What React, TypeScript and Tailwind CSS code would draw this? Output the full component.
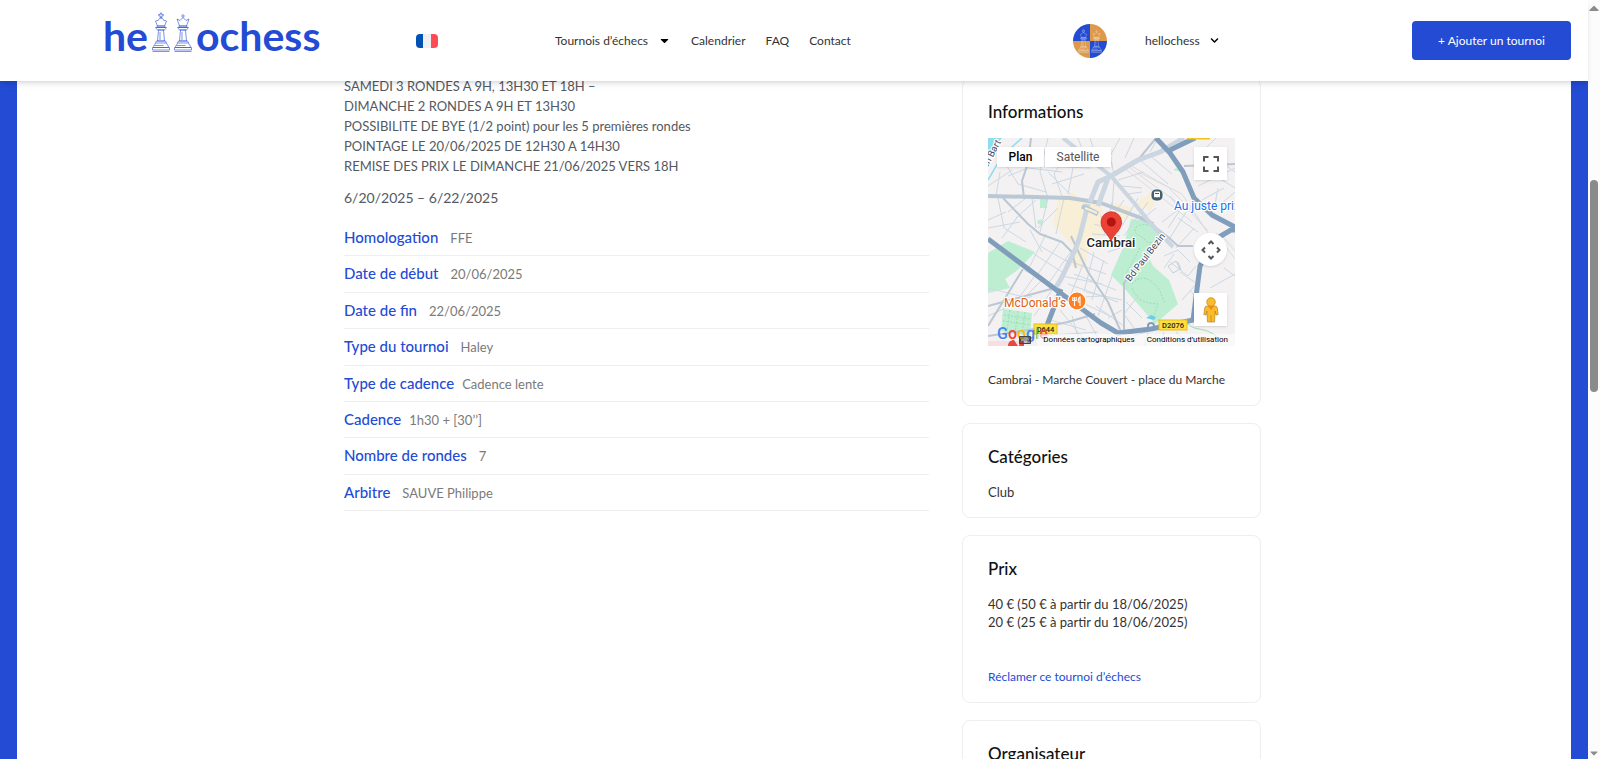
import type { ReactNode } from 'react'
import { FaCaretDown, FaChevronDown, FaCaretUp, FaKeyboard } from 'react-icons/fa'

const NAV_LINKS = ['Calendrier', 'FAQ', 'Contact']

const DETAILS = [
  { label: 'Homologation', value: 'FFE' },
  { label: 'Date de début', value: '20/06/2025' },
  { label: 'Date de fin', value: '22/06/2025' },
  { label: 'Type du tournoi', value: 'Haley' },
  { label: 'Type de cadence', value: 'Cadence lente', tight: true },
  { label: 'Cadence', value: '1h30 + [30’’]', tight: true },
  { label: 'Nombre de rondes', value: '7' },
  { label: 'Arbitre', value: 'SAUVE Philippe' },
]

// Outlined king (with cross) or queen (with crown)
function ChessPiece({ queen, className }: { queen?: boolean; className?: string }) {
  return (
    <svg viewBox="0 0 18 40" className={className} fill="none" stroke="currentColor" strokeWidth="0.6" aria-hidden="true">
      {queen ? (
        <>
          <circle cx="9" cy="4" r="1.2" />
          <path d="M3 7l3 1.5L9 5.500l3 3L15 7l-2.500 7h-7z" />
        </>
      ) : (
        <>
          <path d="M8.300 1h1.400v1.500h1.600v1.400H9.700V6H8.300V3.900H6.700V2.500h1.600z" />
          <path d="M9 6c2 0 2 1 2.500 2.200L14.500 9l-2 5h-7l-2-5 3-.8C7 7 7 6 9 6z" />
        </>
      )}
      <path d="M5 14h8v1.500H5zM3.500 15.500h11l-2 2.500h-7zM6 18h6M6.500 18l-1 11h7l-1-11M8 20v8M4.500 29h9l1 2h-11z" />
      <path d="M3.500 31c-.5 2-2 2-2 4.500h15c0-2.500-1.500-2.500-2-4.500M2.500 33.500h9M.5 35.500h17V38H.500zM.5 39.500h17" />
    </svg>
  )
}

function Logo() {
  return (
    <a href="#" aria-label="hellochess" className="flex items-end text-[41px] leading-10 font-bold text-[#234bd3]">
      <span>he</span>
      <ChessPiece className="mb-1 ml-1 h-10 w-[18px]" />
      <ChessPiece queen className="mx-1 mb-1 h-10 w-[18px]" />
      <span>ochess</span>
    </a>
  )
}

function Avatar() {
  return (
    <div className="relative grid size-[34px] grid-cols-2 overflow-hidden rounded-full">
      <span className="bg-[#234bd3]" />
      <span className="bg-[#dd9a4c]" />
      <span className="bg-[#dd9a4c]" />
      <span className="bg-[#234bd3]" />
      <div className="absolute inset-0 flex items-center justify-center gap-0.5 text-white/70">
        <ChessPiece className="h-6 w-[11px]" />
        <ChessPiece queen className="h-6 w-[11px]" />
      </div>
    </div>
  )
}

function Header() {
  return (
    <header className="relative z-10 grid h-[81px] shrink-0 grid-cols-[416fr_139fr_518fr_339fr_auto] items-center bg-white pr-[17px] text-xs text-[#333] shadow-md">
      <div className="pb-[14px] pl-[103px]">
        <Logo />
      </div>
      <button aria-label="Français" className="flex h-[14px] w-[22px] overflow-hidden rounded">
        <span className="h-full flex-1 bg-[#0052b4]" />
        <span className="h-full flex-1 bg-[#f0f0f0]" />
        <span className="h-full flex-1 bg-[#ff4b55]" />
      </button>
      <nav className="flex items-center gap-5 whitespace-nowrap">
        <a href="#" className="flex items-center gap-2.5">
          Tournois d’échecs
          <FaCaretDown className="size-[13px] text-black" />
        </a>
        {NAV_LINKS.map((link) => (
          <a key={link} href="#">
            {link}
          </a>
        ))}
      </nav>
      <div className="flex items-center gap-[38px]">
        <Avatar />
        <button className="flex items-center gap-2.5">
          hellochess
          <FaChevronDown className="size-[9px] text-black" />
        </button>
      </div>
      <button className="h-[39px] w-[159px] rounded bg-[#234bd3] text-white">+ Ajouter un tournoi</button>
    </header>
  )
}

function MapDrawing() {
  return (
    <svg viewBox="0 0 247 208" preserveAspectRatio="xMidYMid slice" className="h-full w-full" fill="none" fontFamily="Roboto, sans-serif">
      <rect width="247" height="208" fill="#f3f1f2" />

      {/* Built-up areas */}
      <path d="M70 62l14-8 8 6 18 4 8 15-2 18-14 8-6 26-16-3 5-20-20-22zM148 66l14-12 8 6-8 12z" fill="#f9eed6" />
      <path d="M125 64l20 6-6 12-14-3z" fill="#f9eed6" />

      {/* Parks */}
      <g fill="#bdeed2">
        <path d="M20 103l27 11-16 17-14 10 5 9-22 5v-40z" />
        <path d="M143 81l22 3 10 14-2 8-12 14 4 8 16 14 9 24-23 20-30-35-14-14 12-27z" />
        <path d="M15 171l29 4-2 23-29-5z" />
        <path d="M52 61h7v9h-7zM49 83l4-2 2 6-5-1zM186 31l8-2 2 4h-9z" />
      </g>
      <g stroke="#8fd9ae" strokeWidth="0.8" strokeDasharray="2 1.500">
        <path d="M148 89c10-6 20 0 22 7s-9 12-13 6-13-4-9-13M152 110l-14 26M160 112l-11 20M144 146c8-9 16-8 27 5l6 14M144 150c6 14 14 15 26 16l-5 14" />
        <path d="M16 177l26 4M15 183l27 4M22 172l-3 21M30 173l-3 22M37 174l-3 22" />
      </g>
      <path d="M0 0h14L0 17z" fill="#8ddff0" />
      <path d="M0 42L14 18 34 0" stroke="#8ddff0" strokeWidth="1.500" />
      <path d="M158 180l5-3 5 2-2 3z" fill="#74cbe8" />
      <path d="M0 203h40l-6 5H0z" fill="#f8dfdf" />

      {/* Railway */}
      <g stroke="#d9d9dc" strokeWidth="0.9">
        <path d="M138 27l34 25 28 20 20 21M142 27l38 22 26 26 14 20M136 30l36 28 32 26M150 34l44 22 24 36" />
        <path d="M228 95l19 26M232 95l15 18" />
      </g>

      {/* Small streets */}
      <g stroke="#cdd8e2" strokeWidth="1">
        <path d="M14 20l16 26 28 8M20 38l20-8 34 4M60 0l-8 34 8 26M82 10L66 36l8 22M47 28l56 2M0 48l24-16M12 34L8 58M60 34l22 22M88 14l-8 42M96 36l-32 10M20 74l18-14M28 80l20-18M44 60l4 30M60 60l-8 34M70 70L50 90M76 60l-8 36M10 60l6 30 22 14M0 82l18-8M0 90l32-6M30 78L14 100" />
        <path d="M90 0l6 16M102 0l8 24 14-4M132 0l-10 18 4 18M146 0l-9 20M170 0l-8 14M152 22l28 24M160 16l24 20M130 42l26-8M134 48l20 2M126 42l-2 30M140 56l14-2M136 62l-10 14M150 60l-16 28M160 64l-24 34M168 70l-20 16M144 76l22 10M112 78l24 8M106 86l26 8M104 96l28 2M124 64l-8 34M182 58l10 14-12 18M174 84l16-12M198 74l-16 26M190 80l20 14M206 90l-18 20" />
        <path d="M42 92l12 22M58 96l-18 36M72 104l-22 32M84 112l-24 34M46 116l28 18M52 108l28 16M78 122l40 14M74 138l40 8M92 110l28 16M96 124l-14 34M106 114l-10 40M116 122l-12 40M124 138l-14 40M86 136l42 16M80 146l50 18M98 154l36 8M76 156l46 22M120 114l12-4M108 110l22-8M70 160l46-2M36 132l18 10-26 26M48 136l-24 34M64 152l-18 26M0 150l32 8M0 178l44-20M48 162l18 10M72 172l24 30M84 178l8 28M96 174l16 30M62 182l36 10M50 198l60-4M108 168l28 20M120 180l14-8" />
        <path d="M150 158l-14 18 10 14M138 164l16 16M176 118l14-6 12 12M182 124l18 14 8-10M186 116l-10 14M192 134l20 14M194 162l16-18M202 152l8 10M215 30l32 20M222 16l25 18M210 48l37-18M228 70l19-16M214 62l22-12M236 130l11 8M222 150l25-14M188 194l16 14M176 194l-4 14M160 194l-4 14M146 198l12-4M214 14l14-14M230 50l-4 22" />
      </g>
      <path d="M180 128l8-5 4 8-7 4zM190 124l3 8" stroke="#c4d1dd" />
      <path d="M200 186c8 8 18 2 30 14" stroke="#9bdcb8" />

      {/* Secondary roads */}
      <g stroke="#bbc7d3" strokeWidth="2" strokeLinejoin="round">
        <path d="M43 0l-3 25-6 18 2 17M15 60l25 26 12 10 22 8 10 10 4 16M83 98l17 36 20 30 13 30M136 194v-49l37-47M0 168l63-17M0 198l47-7 33-7 27-8M35 131L0 188M158 82l22 17 10 9h15M196 28l51-2M168 0l-18 22" />
      </g>
      <g stroke="#cbd6e1" strokeWidth="5" strokeLinejoin="round">
        <path d="M0 58l47 1 35 1 31 5 40 15 12 6" stroke="#bac8d5" strokeWidth="4" />
        <path d="M75 0l25 20 23 18 24 28 16 20 22 23" strokeWidth="4" />
        <path d="M102 64l8-20 13-6 27-16 22-8 24-14" />
        <path d="M110 68l10-28M100 66l-8 32-4 12-15 31-6 10" />
        <path d="M94 68l16 8" stroke="#bac8d5" />
      </g>
      <path d="M97 70l12 5" stroke="#f9eed6" strokeWidth="2" />

      {/* Main roads */}
      <g stroke="#819dbc" strokeWidth="5" strokeLinejoin="round">
        <path d="M168 0l14 15 13 19 11 26 18 17 23 12M182 12l25-12" />
        <path d="M0 101l67 50 46 34 17 10 33-4 42-9 7-54 14-26 17-10h10M73 151l-15 39" />
      </g>
      <circle cx="163" cy="188" r="3" stroke="#819dbc" strokeWidth="2" />

      {/* Road badges */}
      <g fontSize="7.500" fontWeight="500" textAnchor="middle">
        <path d="M199 0h23v1.500h-23z" fill="#f2c31b" />
        <rect x="46" y="186" width="23" height="10" fill="#ffdf3f" stroke="#e5bd20" />
        <text x="57.500" y="194" fill="#222">D644</text>
        <rect x="171" y="182" width="28" height="10" fill="#ffdf3f" stroke="#e5bd20" />
        <text x="185" y="190" fill="#222">D2076</text>
      </g>

      {/* Places */}
      <g stroke="#fff" strokeWidth="2.500" paintOrder="stroke" strokeLinejoin="round">
        <text x="186" y="72" fontSize="12" fill="#1a73e8">Au juste prix</text>
        <text x="16" y="169" fontSize="12" fill="#d8621b">McDonald’s</text>
        <text x="123" y="109" fontSize="13" fontWeight="500" fill="#222" textAnchor="middle">Cambrai</text>
        <text transform="translate(142 144) rotate(-52)" fontSize="9.500" fill="#3f4a59">Bd Paul Bezin</text>
        <text transform="translate(-6 40) rotate(-62)" fontSize="9.500" fill="#3f4a59">Jean Bart</text>
      </g>
      <rect x="163" y="51" width="12" height="12" rx="5" fill="#45606f" stroke="#fff" strokeWidth="0.800" />
      <rect x="166" y="53.500" width="6" height="6" rx="1" fill="#fff" />
      <path d="M167 55.500h4M167 61l1-2M171 61l-1-2" stroke="#45606f" />
      <path d="M89 173.500l-5-4h10z" fill="#fff" />
      <circle cx="89" cy="163" r="9" fill="#ff8020" stroke="#fff" strokeWidth="1.200" />
      <path d="M86.500 159v9M84.800 159v3.500h3.400V159M92 168v-9c-2 1-2 4-1.500 5H92" stroke="#fff" strokeWidth="1.100" />

      {/* Hospital marker at the bottom edge */}
      <path d="M20 208c0-4 3-6 6-6l4 6zM31 208l1-5h4v5z" fill="#ea4545" />

      {/* Marker */}
      <path d="M123 104c-1-7-10-11-10-20a10.300 10.300 0 0 1 20.600 0c0 9-9.600 13-10.600 20z" fill="#ea4335" stroke="#c5221f" strokeWidth="0.700" />
      <circle cx="123.300" cy="84" r="4.500" fill="#b31412" />
    </svg>
  )
}

function TournamentMap() {
  return (
    <div className="relative h-[208px] overflow-hidden font-[Roboto,sans-serif]">
      <MapDrawing />
      {/* Map controls float over the drawing */}
      <div className="absolute top-[9px] left-[9px] flex gap-px text-xs">
        <button className="h-5 w-[47px] bg-white font-medium text-black shadow-sm">Plan</button>
        <button className="h-5 w-[66px] bg-white text-[#565656] shadow-sm">Satellite</button>
      </div>
      <button aria-label="Plein écran" className="absolute top-[9px] right-2 grid size-[33px] place-items-center bg-white shadow">
        <svg viewBox="0 0 16 16" className="size-4" fill="none" stroke="#555" strokeWidth="2">
          <path d="M1 5.500V1h4.500M10.500 1H15v4.500M15 10.500V15h-4.500M5.500 15H1v-4.500" />
        </svg>
      </button>
      <button aria-label="Commandes de la caméra" className="absolute top-[95px] right-2 grid size-[33px] place-items-center rounded-full bg-white shadow">
        <svg viewBox="0 0 20 20" className="size-5" fill="none" stroke="#555" strokeWidth="2">
          <path d="M7.500 4L10 1.500 12.500 4M7.500 16l2.500 2.500 2.500-2.500M4 7.500L1.500 10 4 12.500M16 7.500l2.500 2.500-2.500 2.500" />
        </svg>
      </button>
      <button aria-label="Street View" className="absolute top-[155px] right-2 grid size-[33px] place-items-center bg-white shadow">
        <svg viewBox="0 0 16 26" className="h-[26px] w-4" fill="#fbbc2c" stroke="#a5761e" strokeWidth="0.600">
          <path d="M3.500 9h9c1 0 1.500.8 1.700 2l1 6.500-2.200.5-.8-4-.7 11h-7l-.7-11-.8 4-2.200-.5 1-6.500C2 9.800 2.500 9 3.500 9z" />
          <circle cx="8" cy="5" r="4.300" />
          <path d="M5 9l3 4 3-4z" fill="#e58b1f" stroke="none" />
          <path d="M8 18v7" />
        </svg>
      </button>
      <div className="absolute bottom-0.5 left-[9px] text-base leading-5 font-medium">
        <span className="text-[#4285f4]">G</span>
        <span className="text-[#ea4335]">o</span>
        <span className="text-[#fbbc05]">o</span>
        <span className="text-[#4285f4]">g</span>
        <span className="text-[#34a853]">l</span>
        <span className="text-[#ea4335]">e</span>
      </div>
      <div className="absolute right-0 bottom-0 flex h-3 items-center text-[8px] text-black">
        <button className="flex h-3 items-center gap-1.5">
          <FaKeyboard className="size-3 text-[#444]" />
          <span className="bg-white/60 px-1.5 leading-3">Données cartographiques</span>
        </button>
        <a href="#" className="bg-white/60 pr-[7px] pl-1.5 leading-3">
          Conditions d’utilisation
        </a>
      </div>
    </div>
  )
}

function Card({ title, children }: { title: string; children: ReactNode }) {
  return (
    <section className="rounded-lg border border-[#eee] px-[25px] pt-[21px] pb-4 text-[13px] leading-[18px] text-[#333]">
      <h2 className="mb-[14px] text-[17px] leading-6 font-medium text-[#111]">{title}</h2>
      {children}
    </section>
  )
}

function Details() {
  return (
    <dl className="mt-3 grid h-[291px] auto-rows-fr">
      {DETAILS.map(({ label, value, tight }) => (
        <div key={label} className={`flex items-baseline border-b border-[#eee] pt-[5px] ${tight ? 'gap-2' : 'gap-3'}`}>
          <dt className="text-[15px] leading-6 font-medium text-[#234bd3]">{label}</dt>
          <dd className="text-[13px] leading-6 text-[#7a7a7a]">{value}</dd>
        </div>
      ))}
    </dl>
  )
}

function Scrollbar() {
  return (
    <div className="flex w-3 shrink-0 flex-col items-center bg-[#fcfcfc] text-[#8b8b8b]" aria-hidden="true">
      <FaCaretUp className="h-4 w-3" />
      <div className="mt-[164px] h-[212px] w-2 rounded-full bg-[#8b8b8b]" />
      <FaCaretDown className="mt-auto h-3 w-3" />
    </div>
  )
}

export default function App() {
  return (
    <div className="flex h-screen overflow-hidden bg-white font-[Lato,sans-serif]">
      <div className="flex min-w-0 flex-1 flex-col">
        <Header />
        <main className="min-h-0 flex-1 border-x-[17px] border-[#234bd3]">
          <div className="mx-auto flex max-w-[934px] items-start gap-[33px] pl-[17px]">
            <article className="-mt-[5px] min-w-0 flex-1">
              <p className="text-[13px] leading-5 text-[#54595f]">
                SAMEDI 3 RONDES A 9H, 13H30 ET 18H –<br />
                DIMANCHE 2 RONDES A 9H ET 13H30
                <br />
                POSSIBILITE DE BYE (1/2 point) pour les 5 premières rondes
                <br />
                POINTAGE LE 20/06/2025 DE 12H30 A 14H30
                <br />
                REMISE DES PRIX LE DIMANCHE 21/06/2025 VERS 18H
              </p>
              <p className="mt-3 text-sm leading-5 text-[#54595f]">6/20/2025 – 6/22/2025</p>
              <Details />
            </article>
            <aside className="-mt-[3px] flex w-[299px] shrink-0 flex-col gap-[17px]">
              <Card title="Informations">
                <TournamentMap />
                <p className="mt-[25px] text-xs leading-[18px] whitespace-nowrap">Cambrai - Marche Couvert - place du Marche</p>
              </Card>
              <Card title="Catégories">
                <p>Club</p>
              </Card>
              <Card title="Prix">
                <p>
                  40 € (50 € à partir du 18/06/2025)
                  <br />
                  20 € (25 € à partir du 18/06/2025)
                </p>
                <a href="#" className="mt-[37px] block text-xs leading-[18px] text-[#234bd3]">
                  Réclamer ce tournoi d’échecs
                </a>
              </Card>
              <Card title="Organisateur">
                <p>Club</p>
              </Card>
            </aside>
          </div>
        </main>
      </div>
      <Scrollbar />
    </div>
  )
}
